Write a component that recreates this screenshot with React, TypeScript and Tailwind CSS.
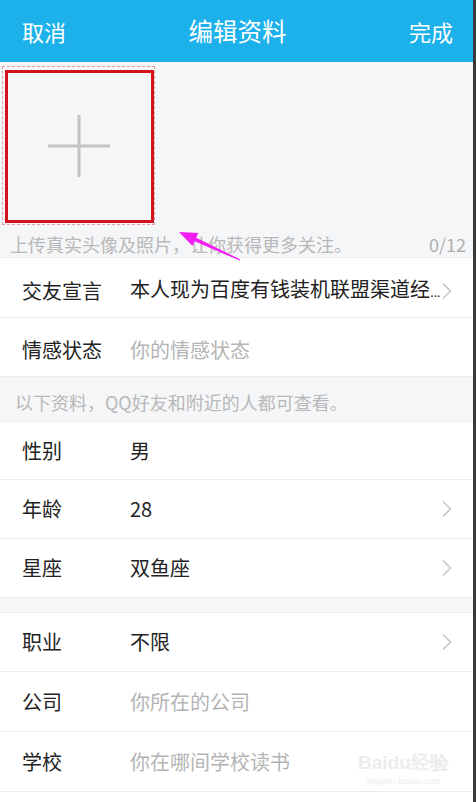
import React from "react";

function Chevron() {
  return (
    <svg width="12" height="18" viewBox="0 0 12 18" className="shrink-0">
      <path d="M2 1.5 L9.5 9 L2 16.5" fill="none" stroke="#c6c6c6" strokeWidth="1.6" />
    </svg>
  );
}

type RowProps = {
  label: string;
  value: React.ReactNode;
  placeholder?: boolean;
  chevron?: boolean;
  h: string;
  shift?: boolean;
};

function Row({ label, value, placeholder, chevron, h, shift }: RowProps) {
  return (
    <div className={`flex items-center bg-white border-b border-[#ececec] pl-[22px] pr-[20px] shrink-0 ${h} ${shift ? "pt-[6px]" : ""}`}>
      <div className="w-[108px] shrink-0 text-[20px] leading-[28px] text-[#222]">{label}</div>
      <div className={`flex-1 min-w-0 whitespace-nowrap text-[20px] leading-[28px] ${placeholder ? "text-[#b4b4b4]" : "text-[#222]"}`}>
        {value}
      </div>
      {chevron ? <Chevron /> : null}
    </div>
  );
}

export default function App() {
  return (
    <div className="relative flex w-[476px] h-[802px] overflow-hidden font-['Noto_Sans_CJK_SC',sans-serif]">
      <div className="flex flex-col w-[473px] h-full bg-white">
        {/* header */}
        <div className="flex items-center justify-between h-[62px] bg-[#1db1ec] pl-[22px] pr-[20px] text-white shrink-0">
          <span className="text-[22px] leading-[30px]">取消</span>
          <span className="text-[24.5px] leading-[30px]">编辑资料</span>
          <span className="text-[22px] leading-[30px]">完成</span>
        </div>

        {/* photo area */}
        <div className="h-[168px] bg-[#f5f6f8] pt-[4px] pl-[2px] shrink-0">
          <div className="relative w-[153px] h-[159px] border border-dashed border-[#dba3a3] flex items-center justify-center">
            <svg width="64" height="64" viewBox="0 0 64 64">
              <rect x="1" y="30.5" width="62" height="3" fill="#c3c3c3" />
              <rect x="30.5" y="1" width="3" height="62" fill="#c3c3c3" />
            </svg>
            <div className="absolute left-[2px] top-[3px] w-[149px] h-[153px] border-[3px] border-[#d3121b]" />
          </div>
        </div>

        {/* hint */}
        <div className="flex items-center justify-between h-[28px] bg-[#f5f6f8] pl-[10px] pr-[7px] border-b border-[#ececec] shrink-0">
          <span className="text-[18px] leading-[24px] text-[#b8b8b8]">上传真实头像及照片，让你获得更多关注。</span>
          <span className="text-[18px] leading-[24px] text-[#b0b0b0]">0/12</span>
        </div>

        <Row
          label="交友宣言"
          value={
            <span>
              本人现为百度有钱装机联盟渠道经<span className="font-['Liberation_Sans',sans-serif] text-[14px] tracking-[-0.5px]">...</span>
            </span>
          }
          chevron
          h="h-[60px]"
          shift
        />
        <Row label="情感状态" value="你的情感状态" placeholder h="h-[59px]" shift />

        <div className="flex items-end h-[45px] bg-[#f5f6f8] pl-[15px] pb-[7px] border-b border-[#ececec] shrink-0">
          <span className="text-[18px] leading-[24px] text-[#b8b8b8]">以下资料，QQ好友和附近的人都可查看。</span>
        </div>

        <Row label="性别" value="男" h="h-[58px]" />
        <Row label="年龄" value="28" chevron h="h-[59px]" />
        <Row label="星座" value="双鱼座" chevron h="h-[59px]" />

        <div className="h-[15px] bg-[#f5f6f8] border-b border-[#ececec] shrink-0" />

        <Row label="职业" value="不限" chevron h="h-[59px]" />
        <Row label="公司" value="你所在的公司" placeholder h="h-[60px]" />
        <Row label="学校" value="你在哪间学校读书" placeholder h="h-[60px]" />
        <div className="flex-1 bg-white" />
      </div>
      <div className="w-[3px] h-full bg-[#3a3a3a]" />

      {/* watermark */}
      <div className="absolute left-[358px] top-[752px] flex flex-col items-center pointer-events-none">
        <span className="text-[19px] leading-[22px] text-[#ececec] font-['Liberation_Sans',sans-serif] font-bold">Baidu经验</span>
        <span className="mt-[2px] text-[9px] leading-[11px] text-[#ededed] font-['Liberation_Sans',sans-serif]">jingyan.baidu.com</span>
      </div>

      {/* annotation arrow */}
      <svg className="absolute left-0 top-0 pointer-events-none" width="476" height="802" viewBox="0 0 476 802">
        <polygon
          points="179,232 198.3,233.1 196.2,237.7 240.3,259.4 239.7,260.6 194.6,241.3 192.5,245.9"
          fill="#f41cf4"
        />
      </svg>
    </div>
  );
}
